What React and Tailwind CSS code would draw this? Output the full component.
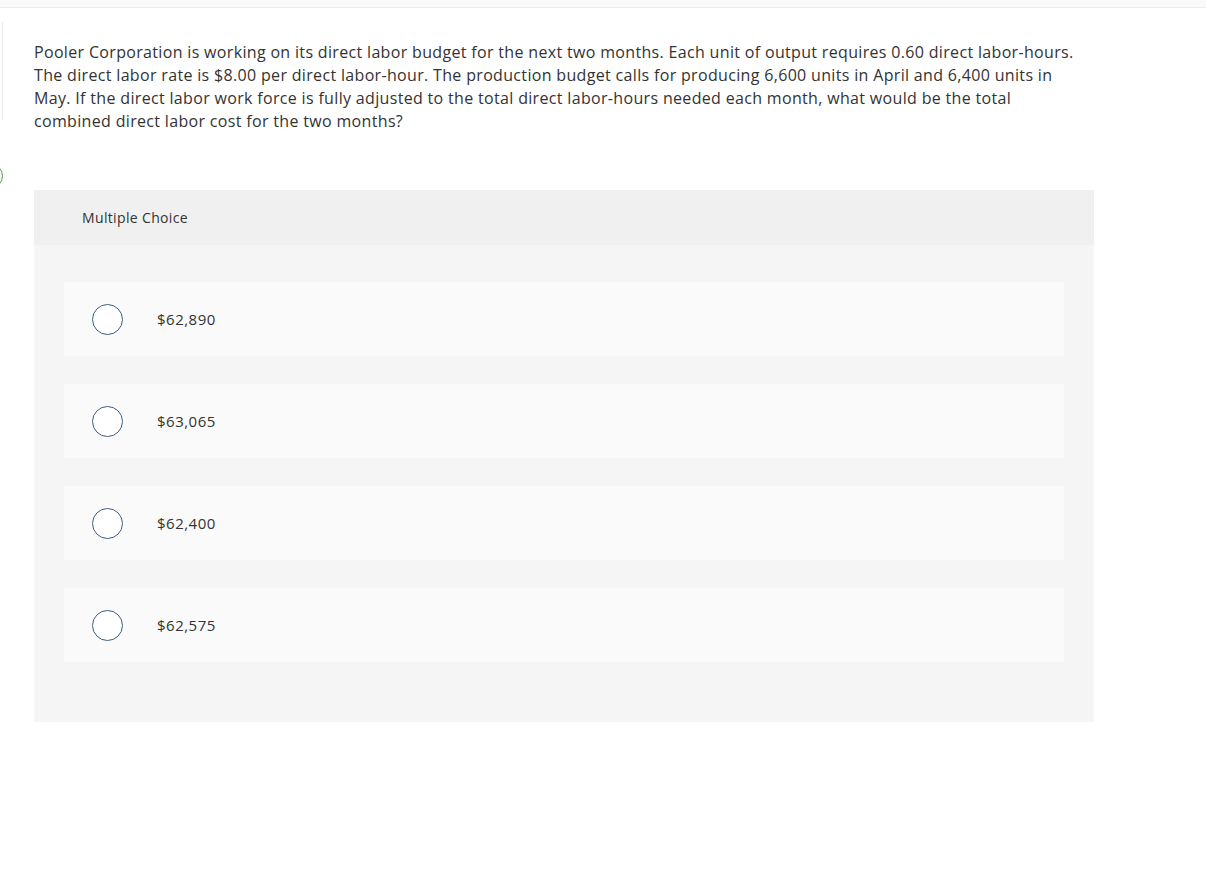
import React from 'react';

const lines = [
  'Pooler Corporation is working on its direct labor budget for the next two months. Each unit of output requires 0.60 direct labor-hours.',
  'The direct labor rate is $8.00 per direct labor-hour. The production budget calls for producing 6,600 units in April and 6,400 units in',
  'May. If the direct labor work force is fully adjusted to the total direct labor-hours needed each month, what would be the total',
  'combined direct labor cost for the two months?',
];

const options = ['$62,890', '$63,065', '$62,400', '$62,575'];

export default function App() {
  return (
    <div className="min-h-[889px] bg-white text-[#333] font-['Open_Sans',sans-serif] relative overflow-hidden">
      <div className="h-[8px] bg-[#fafafa] border-b border-[#ececec]"></div>
      <div className="absolute left-[2px] top-[22px] h-[98px] border-l border-[#ececec]"></div>
      <div className="absolute left-[-24px] top-[163px] w-[27px] h-[26px] rounded-full border border-[#5a9a5a]"></div>

      <div className="pl-[34px] pt-[33px]">
        <p className="text-[16px] leading-[23px] tracking-[0.33px]">
          {lines.map((l) => (
            <span key={l} className="block whitespace-nowrap">{l}</span>
          ))}
        </p>

        <div className="mt-[57px] w-[1060px] bg-[#f5f5f5] rounded-[2px]">
          <div className="h-[55px] bg-[#f0f0f0] flex items-center pl-[48px] pb-[1px] text-[14px] tracking-[0.35px]">Multiple Choice</div>
          <div className="px-[30px] pt-[37px] pb-[60px] flex flex-col gap-[28px]">
            {options.map((o) => (
              <div key={o} className="h-[74px] bg-[#fafafa] flex items-center pl-[28px]">
                <span className="w-[31px] h-[31px] rounded-full border-[1.5px] border-[#3d5f80] bg-white shrink-0"></span>
                <span className="ml-[34px] text-[15px] tracking-[0.5px]">{o}</span>
              </div>
            ))}
          </div>
        </div>
      </div>
    </div>
  );
}
